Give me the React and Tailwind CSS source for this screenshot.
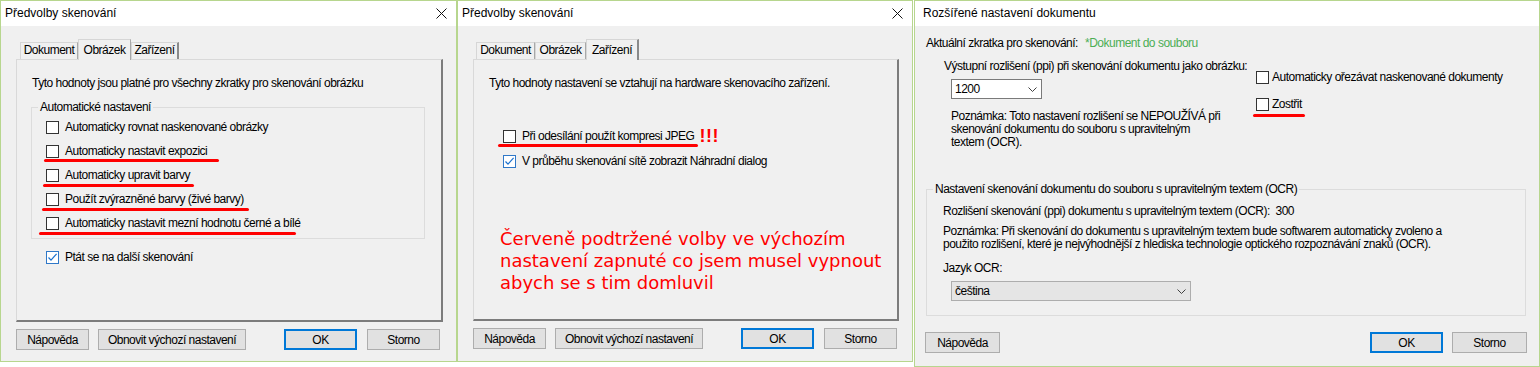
import React from "react";

function CloseX() {
  return (
    <svg width="11" height="11" viewBox="0 0 11 11" className="shrink-0">
      <path d="M0.5 0.5 L10.5 10.5 M10.5 0.5 L0.5 10.5" stroke="#111" strokeWidth="1" fill="none" />
    </svg>
  );
}

function Chevron() {
  return (
    <svg width="9" height="5" viewBox="0 0 9 5" className="shrink-0">
      <path d="M0.5 0.5 L4.5 4.5 L8.5 0.5" stroke="#404040" strokeWidth="1" fill="none" />
    </svg>
  );
}

function Box({ checked }) {
  if (checked) {
    return (
      <span className="w-[13px] h-[13px] shrink-0 border border-[#2f78c8] bg-white flex items-center justify-center">
        <svg width="11" height="11" viewBox="0 0 11 11">
          <path d="M1.5 5.5 L4 8.2 L9.6 1.8" stroke="#1c72cf" strokeWidth="1.2" fill="none" />
        </svg>
      </span>
    );
  }
  return <span className="w-[13px] h-[13px] shrink-0 border border-[#333333] bg-white" />;
}

function Row({ checked, label, children, line }) {
  return (
    <div className="relative h-[24px] flex items-center gap-[6px]">
      <Box checked={checked} />
      <span className="leading-[15px] whitespace-nowrap">{label}</span>
      {children}
      {line}
    </div>
  );
}

function Btn({ w, ok, children, ml }) {
  return (
    <div
      className={`${w} ${ml || ""} h-[21px] flex items-center justify-center bg-[#e1e1e1] ${
        ok ? "border-2 border-[#0078d7]" : "border border-[#adadad]"
      }`}
    >
      {children}
    </div>
  );
}

function TitleBar({ title, close }) {
  return (
    <div className="h-[25px] bg-white flex items-center justify-between pl-[4px] pr-[9px] tracking-normal">
      <span className="leading-[15px]">{title}</span>
      {close && <CloseX />}
    </div>
  );
}

function Tab({ w, sel, last, children }) {
  return (
    <div
      className={`${w} ${
        sel ? "h-[21px] -mb-px relative z-10 pt-[3px]" : "h-[17px]"
      } bg-[#f0f0f0] border-t border-l border-[#d6d6d6] ${
        last ? "border-r-2 border-r-[#8a8a8a]" : "border-r border-r-[#a8a8a8]"
      } text-center leading-[15px] whitespace-nowrap`}
    >
      {children}
    </div>
  );
}

function Redline({ cls }) {
  return <span className={`absolute h-[3px] rounded-full bg-[#ff0000] ${cls}`} />;
}

function BottomButtons() {
  return (
    <div className="mt-[7px] pl-[15px] flex">
      <Btn w="w-[73px]">Nápověda</Btn>
      <Btn w="w-[148px]" ml="ml-[9px]">Obnovit výchozí nastavení</Btn>
      <Btn w="w-[73px]" ml="ml-[38px]" ok>OK</Btn>
      <Btn w="w-[73px]" ml="ml-[10px]">Storno</Btn>
    </div>
  );
}

function Dialog1() {
  return (
    <div className="w-[457px] h-[362px] border border-[#b7d68e] flex flex-col shrink-0">
      <TitleBar title="Předvolby skenování" close />
      <div className="flex-1 bg-[#f0f0f0] flex flex-col">
        <div className="pt-[13px] pl-[19px] h-[33px] flex items-end">
          <Tab w="w-[58px]">Dokument</Tab>
          <Tab w="w-[53px]" sel>Obrázek</Tab>
          <Tab w="w-[48px]" last>Zařízení</Tab>
        </div>
        <div className="ml-[15px] w-[427px] h-[263px] border-t border-l border-[#d9d9d9] border-r-2 border-b-2 border-r-[#7c7c7c] border-b-[#7c7c7c] pt-[16px] pl-[15px]">
          <p className="leading-[15px] whitespace-nowrap">
            Tyto hodnoty jsou platné pro všechny zkratky pro skenování obrázku
          </p>
          <fieldset className="mt-[9px] -ml-px w-[394px] border border-[#dcdcdc] pb-[3px]">
            <legend className="ml-[6px] px-[2px] leading-[15px]">Automatické nastavení</legend>
            <div className="pl-[14px]">
              <Row label="Automaticky rovnat naskenované obrázky" />
              <Row
                label="Automaticky nastavit expozici"
                line={<Redline cls="top-[20px] left-[-2px] w-[175px]" />}
              />
              <Row
                label="Automaticky upravit barvy"
                line={<Redline cls="top-[21px] left-[-3px] w-[151px]" />}
              />
              <Row
                label="Použít zvýrazněné barvy (živé barvy)"
                line={<Redline cls="top-[21px] left-[-4px] w-[207px]" />}
              />
              <Row
                label="Automaticky nastavit mezní hodnotu černé a bílé"
                line={<Redline cls="top-[21px] left-[-7px] w-[257px]" />}
              />
            </div>
          </fieldset>
          <div className="mt-[6px] pl-[14px]">
            <Row checked label="Ptát se na další skenování" />
          </div>
        </div>
        <BottomButtons />
      </div>
    </div>
  );
}

function Dialog2() {
  return (
    <div className="w-[456px] h-[362px] border border-[#b7d68e] flex flex-col shrink-0">
      <TitleBar title="Předvolby skenování" close />
      <div className="flex-1 bg-[#f0f0f0] flex flex-col">
        <div className="pt-[13px] pl-[18px] h-[33px] flex items-end">
          <Tab w="w-[59px]">Dokument</Tab>
          <Tab w="w-[51px]">Obrázek</Tab>
          <Tab w="w-[53px]" sel last>Zařízení</Tab>
        </div>
        <div className="ml-[15px] w-[426px] h-[262px] border-t border-l border-[#d9d9d9] border-r-2 border-b-2 border-r-[#7c7c7c] border-b-[#7c7c7c] pt-[16px] pl-[15px]">
          <p className="leading-[15px] whitespace-nowrap">
            Tyto hodnoty nastavení se vztahují na hardware skenovacího zařízení.
          </p>
          <div className="mt-[33px] pl-[14px]">
            <Row
              label="Při odesílání použít kompresi JPEG"
              line={<Redline cls="top-[20px] left-[-5px] w-[200px]" />}
            >
              <span className="-ml-[1px] font-bold text-[18px] leading-[18px] tracking-[0.5px] text-[#ff0000] font-['Liberation_Sans',Arial,sans-serif]">
                !!!
              </span>
            </Row>
            <div className="mt-[1px]">
              <Row checked label="V průběhu skenování sítě zobrazit Náhradní dialog" />
            </div>
          </div>
          <p className="mt-[55px] ml-[11px] text-[18px] leading-[22px] tracking-normal text-[#ff0000] font-['DejaVu_Sans',Verdana,sans-serif]">
            Červeně podtržené volby ve výchozím
            <br />
            nastavení zapnuté co jsem musel vypnout
            <br />
            abych se s tim domluvil
          </p>
        </div>
        <BottomButtons />
      </div>
    </div>
  );
}

function Dialog3() {
  return (
    <div className="w-[626px] h-[367px] border border-[#b7d68e] flex flex-col shrink-0">
      <div className="h-[25px] bg-white flex items-center pl-[8px] tracking-normal">
        <span className="leading-[15px]">Rozšířené nastavení dokumentu</span>
      </div>
      <div className="flex-1 bg-[#f0f0f0] flex flex-col">
        <div className="pt-[10px] pl-[11px] leading-[15px] flex whitespace-nowrap">
          <span className="w-[159px]">Aktuální zkratka pro skenování:</span>
          <span className="text-[#4cae55]">*Dokument do souboru</span>
        </div>
        <div className="flex mt-[8px] pl-[29px]">
          <div className="w-[312px] shrink-0">
            <p className="leading-[15px] whitespace-nowrap">
              Výstupní rozlišení (ppi) při skenování dokumentu jako obrázku:
            </p>
            <div className="ml-[7px] mt-[5px] w-[91px] h-[20px] bg-white border border-[#7a7a7a] flex items-center justify-between pl-[3px] pr-[4px]">
              <span className="leading-[15px]">1200</span>
              <Chevron />
            </div>
            <p className="ml-[7px] mt-[11px] leading-[13px] whitespace-nowrap">
              Poznámka: Toto nastavení rozlišení se NEPOUŽÍVÁ při
              <br />
              skenování dokumentu do souboru s upravitelným
              <br />
              textem (OCR).
            </p>
          </div>
          <div className="pt-[10px]">
            <div className="h-[16px] flex items-center gap-[3px]">
              <Box />
              <span className="leading-[15px] whitespace-nowrap">
                Automaticky ořezávat naskenované dokumenty
              </span>
            </div>
            <div className="relative mt-[11px] h-[16px] flex items-center gap-[3px]">
              <Box />
              <span className="leading-[15px]">Zostřit</span>
              <Redline cls="top-[18px] left-[-3px] w-[52px]" />
            </div>
          </div>
        </div>
        <fieldset className="mt-[33px] ml-[11px] w-[600px] border border-[#dcdcdc] pb-[14px] pl-[16px]">
          <legend className="-ml-[10px] px-[2px] leading-[15px]">
            Nastavení skenování dokumentu do souboru s upravitelným textem (OCR)
          </legend>
          <p className="mt-[7px] leading-[15px] whitespace-nowrap">
            Rozlišení skenování (ppi) dokumentu s upravitelným textem (OCR):&nbsp; 300
          </p>
          <p className="mt-[6px] leading-[13px] whitespace-nowrap">
            Poznámka: Při skenování do dokumentu s upravitelným textem bude softwarem automaticky zvoleno a
            <br />
            použito rozlišení, které je nejvýhodnější z hlediska technologie optického rozpoznávání znaků (OCR).
          </p>
          <p className="mt-[10px] leading-[15px]">Jazyk OCR:</p>
          <div className="ml-[8px] mt-[5px] w-[240px] h-[20px] bg-[#e5e5e5] border border-[#adadad] flex items-center justify-between pl-[3px] pr-[4px]">
            <span className="leading-[15px]">čeština</span>
            <Chevron />
          </div>
        </fieldset>
        <div className="mt-[16px] pl-[10px] pr-[12px] flex">
          <Btn w="w-[75px]">Nápověda</Btn>
          <div className="flex-1" />
          <Btn w="w-[73px]" ok>OK</Btn>
          <Btn w="w-[75px]" ml="ml-[9px]">Storno</Btn>
        </div>
      </div>
    </div>
  );
}

export default function App() {
  return (
    <div className="flex items-start w-[1540px] h-[367px] overflow-hidden bg-white text-black text-[12px] tracking-[-0.5px] font-['Liberation_Sans',Arial,sans-serif]">
      <Dialog1 />
      <Dialog2 />
      <div className="w-[1px] shrink-0" />
      <Dialog3 />
    </div>
  );
}
